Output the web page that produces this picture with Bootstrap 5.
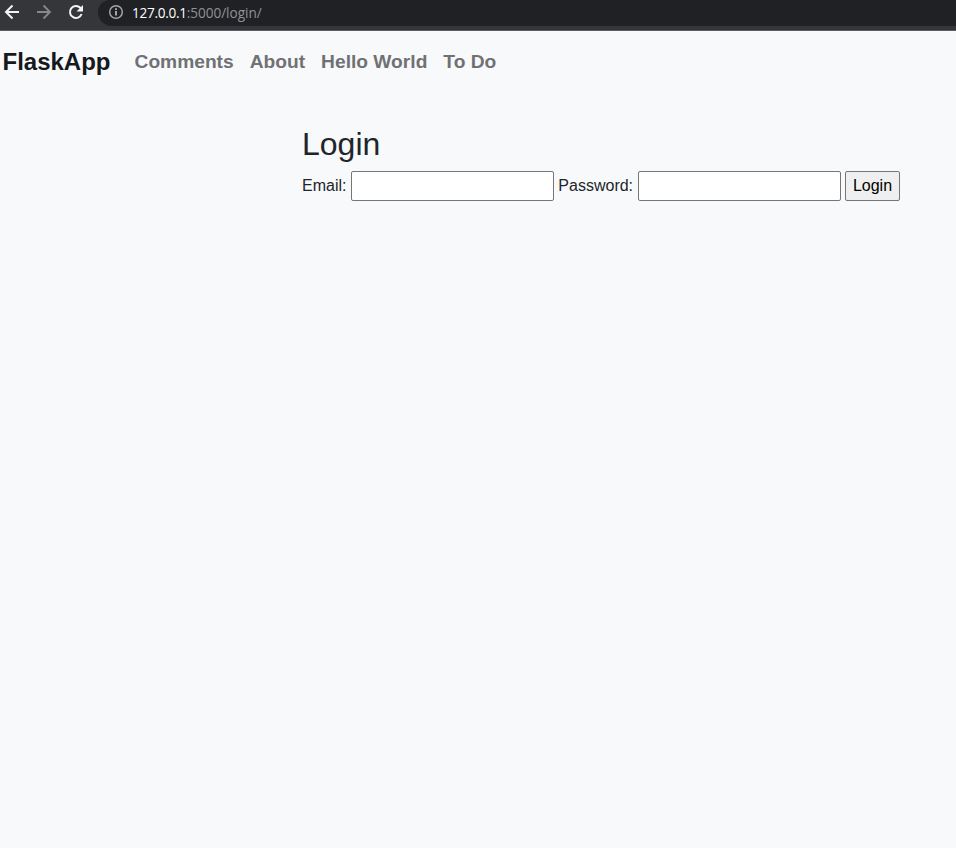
<!DOCTYPE html>
<html lang="en">
<head>
<meta charset="utf-8">
<meta name="viewport" content="width=device-width, initial-scale=1">
<title>Login</title>
<link href="https://cdn.jsdelivr.net/npm/bootstrap@5.3.0/dist/css/bootstrap.min.css" rel="stylesheet">
<style>
body{background:#f8f9fb;color:#212529;font-family:"Liberation Sans",Arial,sans-serif;min-height:848px;overflow:hidden}
.browser-bar{height:31px;background:#35363a;border-bottom:1px solid #5c5d60}
.browser-tools{width:98px;height:24px;padding-left:4px;gap:16px;color:#f1f3f4}
.address{height:26px;background:#202124;border-radius:0 0 0 14px;border-top-left-radius:12px;padding-left:10px;color:#8f9296;font:13.6px/25px "Open Sans","Noto Sans",sans-serif}
.address b{font-weight:500;color:#fff;letter-spacing:-.3px}
.address-text{margin-left:8px;letter-spacing:-.03px}
.site-nav{height:62px;padding:0 0 0 2.5px}
.site-nav .navbar-brand{font-size:24px;font-weight:700;color:#16181b;margin-right:16px;padding:0}
.site-nav .nav-link{font-size:19.2px;font-weight:700;color:#707173;padding:0 8px}
.login-area{margin-left:302px;padding-top:32px}
.login-area h1{font-size:32px;font-weight:400;line-height:38px;margin-bottom:8px}
.login-line{white-space:nowrap;line-height:24px}
.plain-field{width:203px;height:30px;border:1px solid #767676;border-radius:2px;background:#fff;padding:1px 2px}
.plain-button{height:30px;width:55px;border:1px solid #767676;border-radius:2px;background:#efefef;color:#000;padding:1px 6px}
</style>
</head>
<body>
<header class="browser-bar d-flex">
  <div class="browser-tools d-flex align-items-center flex-shrink-0">
    <svg width="16" height="16" viewBox="0 0 16 16" fill="none" stroke="currentColor" stroke-width="2"><path d="M15 8H2M8.5 1.5 2 8l6.500 6.500"/></svg>
    <svg width="16" height="16" viewBox="0 0 16 16" fill="none" stroke="#86888b" stroke-width="1.800"><path d="M1 8h13M7.500 1.500 14 8l-6.500 6.500"/></svg>
    <svg width="16" height="16" viewBox="0 0 16 16" fill="none" stroke="currentColor" stroke-width="2"><path d="M13.600 10A6 6 0 1 1 12.300 3.800L13.500 5"/><path d="M15 1v6.500H8.500z" fill="currentColor" stroke="none"/></svg>
  </div>
  <div class="address flex-grow-1 d-flex">
    <svg width="16" height="24" viewBox="0 0 16 24" fill="none" stroke="#a2a5a9" stroke-width="1.500"><circle cx="8" cy="12" r="6.300"/><path d="M8 11v4.500M8 8.200v1.700" stroke-width="2"/></svg>
    <span class="address-text"><b>127.0.0.1</b>:5000/login/</span>
  </div>
</header>
<nav class="navbar navbar-expand site-nav">
  <a class="navbar-brand" href="#">FlaskApp</a>
  <div class="navbar-nav">
    <a class="nav-link" href="#">Comments</a>
    <a class="nav-link" href="#">About</a>
    <a class="nav-link" href="#">Hello World</a>
    <a class="nav-link" href="#">To Do</a>
  </div>
</nav>
<main class="login-area">
  <h1>Login</h1>
  <form class="login-line">
    <label for="email">Email:</label>
    <input class="plain-field" id="email" type="text">
    <label for="password">Password:</label>
    <input class="plain-field" id="password" type="password">
    <button class="plain-button" type="button">Login</button>
  </form>
</main>
<script src="https://cdn.jsdelivr.net/npm/bootstrap@5.3.0/dist/js/bootstrap.bundle.min.js"></script>
</body>
</html>
